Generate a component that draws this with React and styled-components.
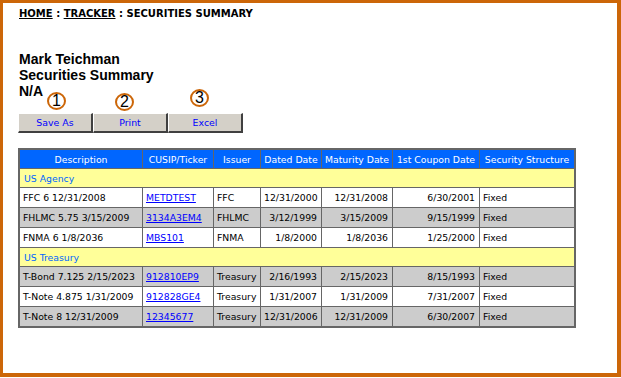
import React from "react";
import styled, { createGlobalStyle } from "styled-components";

const Global = createGlobalStyle`
  html, body { margin: 0; padding: 0; background: #ffffff; }
  body { font-family: "DejaVu Sans", Verdana, sans-serif; }
`;

const Frame = styled.div`
  box-sizing: border-box;
  width: 621px;
  height: 377px;
  border-style: solid;
  border-color: #cc6608;
  border-width: 3px 4px 4px 3px;
  padding: 5px 0 0 15px;
  background: #fff;
`;

const Crumbs = styled.div`
  font-family: "DejaVu Sans", Verdana, sans-serif;
  font-weight: bold;
  font-size: 10px;
  line-height: 12px;
  color: #000;
  padding-left: 1px;
`;

const CrumbLink = styled.a`
  color: #000;
  text-decoration: underline;
`;

const Heading = styled.div`
  margin-top: 31px;
  font-family: "Liberation Sans", Arial, sans-serif;
  font-weight: bold;
  font-size: 14px;
  line-height: 16px;
  color: #000;
  padding-left: 1px;
`;

const Toolbar = styled.div`
  position: relative;
  display: flex;
  margin-top: 14px;
`;

const Button = styled.button`
  box-sizing: border-box;
  width: 75px;
  height: 20px;
  margin: 0;
  padding: 0;
  background: #d4d0c8;
  border-style: solid;
  border-width: 1px 2px 2px 1px;
  border-color: #ffffff #404040 #404040 #ffffff;
  font-family: "DejaVu Sans", Verdana, sans-serif;
  font-size: 9.4px;
  color: #0000ff;
  text-align: center;
`;

const Callout = styled.span`
  position: absolute;
  box-sizing: border-box;
  width: 19px;
  height: 18px;
  border: 2.5px solid #cc6608;
  border-radius: 50%;
  background: #fff;
  display: flex;
  align-items: center;
  justify-content: center;
  font-family: "Liberation Sans", Arial, sans-serif;
  font-size: 16px;
  line-height: 1;
  color: #000;
  left: ${(p) => p.$left}px;
  top: ${(p) => p.$top}px;
`;

const Table = styled.table`
  margin-top: 15px;
  border: 2px solid #666666;
  border-spacing: 0;
  table-layout: fixed;
  width: 558px;
  font-family: "DejaVu Sans", Verdana, sans-serif;
  font-size: 9.3px;
`;

const Th = styled.th`
  box-sizing: border-box;
  width: ${(p) => p.$w}px;
  height: 18px;
  padding: 0;
  background: #0066ff;
  color: #fff;
  font-weight: normal;
  text-align: center;
  white-space: nowrap;
  border-left: ${(p) => (p.$first ? "none" : "1px solid #666666")};
`;

const CategoryCell = styled.td`
  box-sizing: border-box;
  height: 19px;
  padding: 0 4px;
  background: #ffff99;
  color: #0066ff;
  border-top: 1px solid #666666;
`;

const Td = styled.td`
  box-sizing: border-box;
  height: 20px;
  padding: 0 4px 0 3px;
  background: ${(p) => (p.$alt ? "#cccccc" : "#ffffff")};
  color: #000;
  text-align: ${(p) => (p.$right ? "right" : "left")};
  white-space: nowrap;
  overflow: visible;
  border-top: 1px solid #666666;
  border-left: ${(p) => (p.$first ? "none" : "1px solid #666666")};
`;

const CellLink = styled.a`
  color: #0000ff;
  text-decoration: underline;
`;

const columns = [
  ["Description", 122],
  ["CUSIP/Ticker", 71],
  ["Issuer", 47],
  ["Dated Date", 61],
  ["Maturity Date", 71],
  ["1st Coupon Date", 87],
  ["Security Structure", 95],
];

const groups = [
  {
    name: "US Agency",
    rows: [
      ["FFC 6 12/31/2008", "METDTEST", "FFC", "12/31/2000", "12/31/2008", "6/30/2001", "Fixed"],
      ["FHLMC 5.75 3/15/2009", "3134A3EM4", "FHLMC", "3/12/1999", "3/15/2009", "9/15/1999", "Fixed"],
      ["FNMA 6 1/8/2036", "MBS101", "FNMA", "1/8/2000", "1/8/2036", "1/25/2000", "Fixed"],
    ],
  },
  {
    name: "US Treasury",
    rows: [
      ["T-Bond 7.125 2/15/2023", "912810EP9", "Treasury", "2/16/1993", "2/15/2023", "8/15/1993", "Fixed"],
      ["T-Note 4.875 1/31/2009", "912828GE4", "Treasury", "1/31/2007", "1/31/2009", "7/31/2007", "Fixed"],
      ["T-Note 8 12/31/2009", "12345677", "Treasury", "12/31/2006", "12/31/2009", "6/30/2007", "Fixed"],
    ],
  },
];

export default function App() {
  return (
    <>
      <Global />
      <Frame>
        <Crumbs>
          <CrumbLink>HOME</CrumbLink> : <CrumbLink>TRACKER</CrumbLink> : SECURITIES SUMMARY
        </Crumbs>
        <Heading>
          <div>Mark Teichman</div>
          <div>Securities Summary</div>
          <div>N/A</div>
        </Heading>
        <Toolbar>
          <Button>Save As</Button>
          <Button>Print</Button>
          <Button>Excel</Button>
          <Callout $left={29} $top={-21}>1</Callout>
          <Callout $left={97} $top={-20}>2</Callout>
          <Callout $left={172} $top={-24}>3</Callout>
        </Toolbar>
        <Table>
          <thead>
            <tr>
              {columns.map(([label, w], i) => (
                <Th key={label} $w={w} $first={i === 0}>
                  {label}
                </Th>
              ))}
            </tr>
          </thead>
          <tbody>
            {groups.map((g) => (
              <React.Fragment key={g.name}>
                <tr>
                  <CategoryCell colSpan={7}>{g.name}</CategoryCell>
                </tr>
                {g.rows.map((r, ri) => {
                  const alt = g.name === "US Agency" ? ri === 1 : ri !== 1;
                  return (
                    <tr key={r[1]}>
                      <Td $alt={alt} $first>{r[0]}</Td>
                      <Td $alt={alt}>
                        <CellLink>{r[1]}</CellLink>
                      </Td>
                      <Td $alt={alt}>{r[2]}</Td>
                      <Td $alt={alt} $right>{r[3]}</Td>
                      <Td $alt={alt} $right>{r[4]}</Td>
                      <Td $alt={alt} $right>{r[5]}</Td>
                      <Td $alt={alt}>{r[6]}</Td>
                    </tr>
                  );
                })}
              </React.Fragment>
            ))}
          </tbody>
        </Table>
      </Frame>
    </>
  );
}
